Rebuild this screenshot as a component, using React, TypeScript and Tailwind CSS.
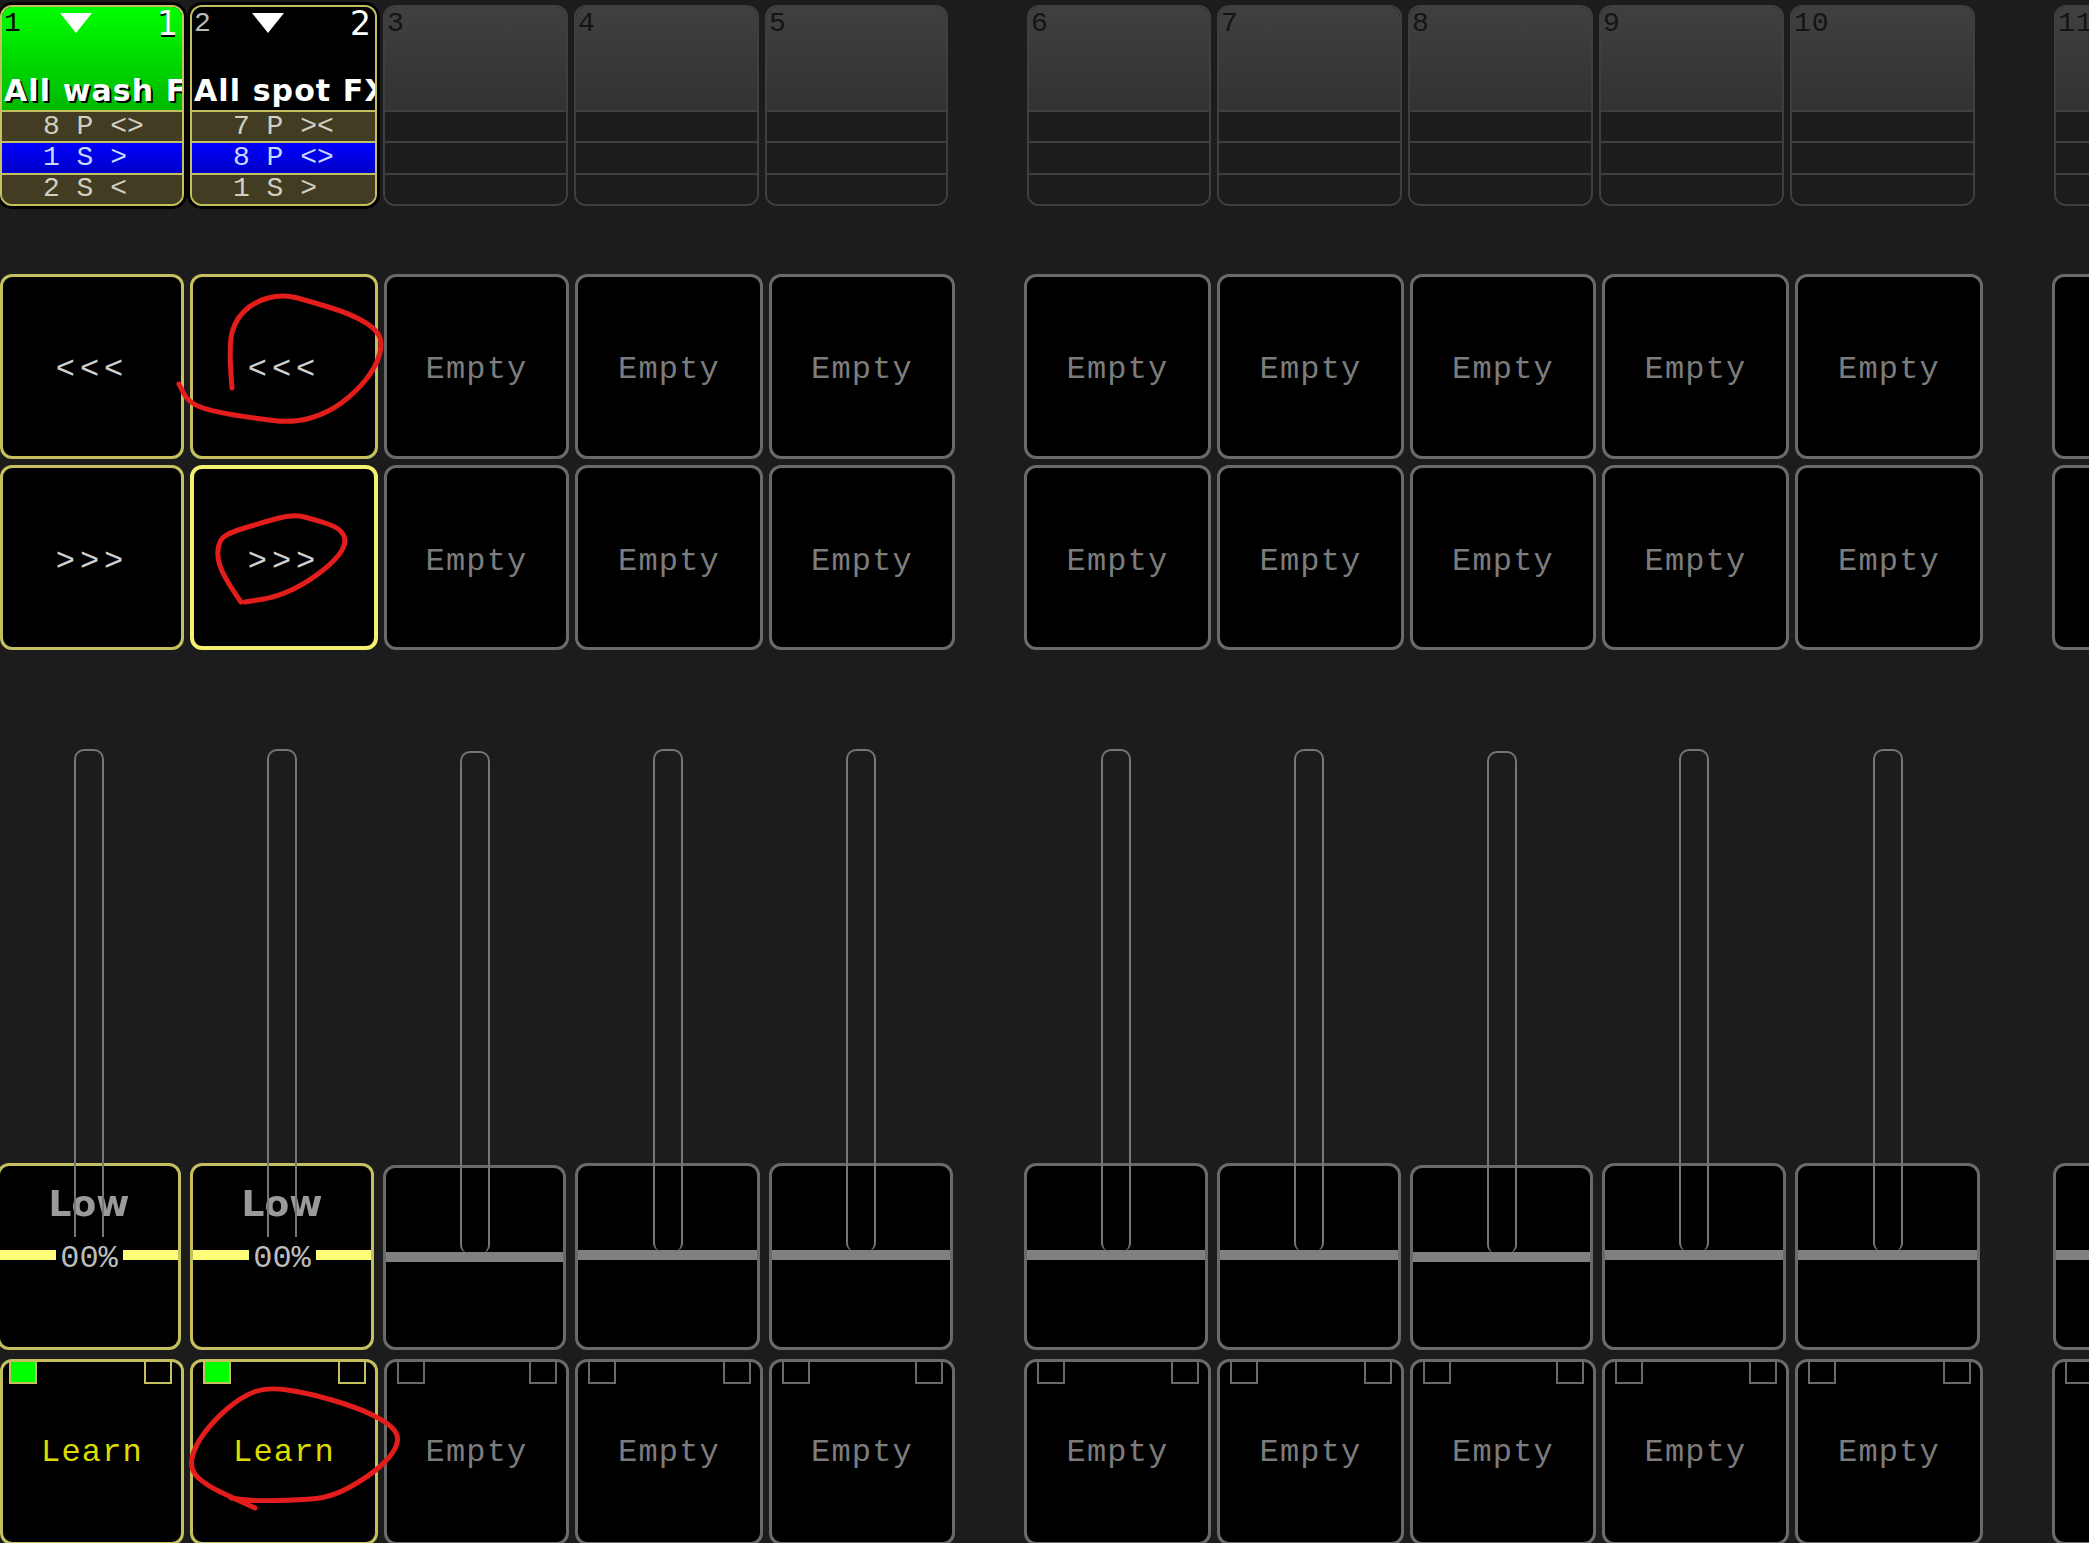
type Tile = { num: string; big?: boolean; name?: string; green?: boolean; rows?: string[]; blue?: number };

const mono = 'font-["Liberation_Mono",monospace]';
const sans = 'font-["DejaVu_Sans",sans-serif]';

const tiles: (Tile | null)[] = [
  { num: '1', big: true, name: 'All wash FX', green: true, rows: ['8 P <>', '1 S >', '2 S <'], blue: 1 },
  { num: '2', big: true, name: 'All spot FX', rows: ['7 P ><', '8 P <>', '1 S >'], blue: 1 },
  { num: '3' },
  { num: '4' },
  { num: '5' },
  null,
  { num: '6' },
  { num: '7' },
  { num: '8' },
  { num: '9' },
  { num: '10' },
  null,
  { num: '11' },
];

// which of the 13 grid slots are real (two spacers split the banks)
const slots = [0, 1, 2, 3, 4, -1, 5, 6, 7, 8, 9, -1, 10];

function TopTile({ tile }: { tile: Tile }) {
  const active = !!tile.rows;
  return (
    <div
      className={`flex h-[201px] flex-col overflow-hidden rounded-[12px] border-2 ${
        active ? 'border-[#c4c060] shadow-[0_0_0_3px_#000]' : 'border-[#3f3f3f]'
      }`}
    >
      <div
        className={`flex h-[103px] flex-col justify-between overflow-hidden ${
          tile.green
            ? 'bg-gradient-to-b from-[#00ff00] to-[#00b800]'
            : active
              ? 'bg-black'
              : 'bg-gradient-to-b from-[#404040] to-[#323232]'
        }`}
      >
        <div className="flex items-start justify-between pl-[2px] pr-[4px]">
          <span
            className={`${mono} text-[28px] leading-[34px] tracking-[1px] ${
              tile.green ? 'text-black' : active ? 'text-[#bbbbbb]' : 'text-[#141414]'
            }`}
          >
            {tile.num}
          </span>
          {active && (
            <svg viewBox="0 0 32 20" className="mt-[6px] ml-[-26px] h-[20px] w-[32px] blur-[0.6px]">
              <polygon points="0,0 32,0 16,20" fill="#ffffff" />
            </svg>
          )}
          {active && (
            <span
              className={`${sans} text-[33px] leading-[34px] text-white [text-shadow:0_2px_0_#000]`}
            >
              {tile.num}
            </span>
          )}
        </div>
        {tile.name && (
          <div
            className={`${sans} pl-[2px] text-[30px] leading-[38px] font-bold tracking-[1.1px] whitespace-nowrap text-white [text-shadow:2px_2px_0_#000]`}
          >
            {tile.name}
          </div>
        )}
      </div>
      {[0, 1, 2].map((i) => {
        const blue = active && tile.blue === i;
        return (
          <div
            key={i}
            className={`${mono} flex flex-1 items-center justify-start border-t-2 pl-[41px] text-[28px] leading-none whitespace-pre ${
              active ? 'border-[#c4c060]' : 'border-[#3f3f3f]'
            } ${
              blue
                ? 'bg-gradient-to-b from-[#0000ff] to-[#0000c8] text-[#c8d8ff]'
                : active
                  ? 'bg-[#423d22] text-[#d0d0c4]'
                  : 'bg-[#1c1c1c]'
            }`}
          >
            {tile.rows ? tile.rows[i] : ''}
          </div>
        );
      })}
    </div>
  );
}

function PadButton({ label, active, bright, lowerRow }: { label: string; active?: boolean; bright?: boolean; lowerRow?: boolean }) {
  return (
    <div
      className={`${mono} flex h-[185px] items-center justify-center rounded-[12px] bg-black text-[32px] leading-none ${
        lowerRow ? 'pt-[9px]' : 'pt-[6px]'
      } ${
        bright
          ? 'border-4 border-[#f4f070]'
          : active
            ? 'border-[3px] border-[#c4c060]'
            : 'border-[3px] border-[#6a6a6a]'
      } ${active ? 'tracking-[5px] text-[#d0d0d0]' : 'tracking-[1.2px] text-[#7c7c7c]'}`}
    >
      {label}
    </div>
  );
}

function Fader({ active, lower, hideTrack, first }: { active?: boolean; lower?: boolean; hideTrack?: boolean; first?: boolean }) {
  return (
    <div className={`flex h-[601px] flex-col justify-end ${first ? '-ml-[3px]' : ''}`}>
      {!hideTrack && (
        <div
          className={`relative z-10 mx-auto w-[30px] rounded-t-[10px] border-x-2 border-t-2 border-[#767676] ${
            active ? '-mb-[74px] h-[488px]' : 'rounded-b-[8px] -mb-[88px] h-[502px]'
          }`}
        />
      )}
      <div
        className={`flex flex-col rounded-[12px] border-[3px] bg-black ${
          active ? 'border-[#c4c060]' : 'border-[#6a6a6a]'
        } ${lower ? 'h-[185px]' : 'h-[187px]'}`}
      >
        <div
          className={`${sans} flex h-[84px] items-center justify-center pb-[8px] text-[36px] leading-none font-bold text-[#9a9a9a] blur-[0.5px]`}
        >
          {active ? 'Low' : ''}
        </div>
        {active ? (
          <div className="flex h-[10px] items-center">
            <div className="h-[10px] flex-1 bg-[#fdfd78]" />
            <span className={`${mono} w-[67px] pt-[8px] text-center text-[32px] leading-none text-[#bcbcbc]`}>00%</span>
            <div className="h-[10px] flex-1 bg-[#fdfd78]" />
          </div>
        ) : (
          <div className="h-[10px] bg-[#808080]" />
        )}
      </div>
    </div>
  );
}

function LearnCell({ label, active, first }: { label: string; active?: boolean; first?: boolean }) {
  const square = active ? 'border-[#c4c060]' : 'border-[#6a6a6a]';
  return (
    <div
      className={`flex h-[186px] flex-col rounded-[12px] border-[3px] bg-black ${
        active ? 'border-[#c4c060]' : 'border-[#6a6a6a]'
      }`}
    >
      <div className="flex justify-between pr-[9px] pl-[10px]">
        <div className={`h-[22px] w-[28px] border-x-2 border-b-2 ${square} ${active ? 'bg-[#00ff00]' : ''} ${first ? '-ml-[4px]' : ''}`} />
        <div className={`h-[22px] w-[28px] border-x-2 border-b-2 ${square}`} />
      </div>
      <div
        className={`${mono} flex flex-1 items-center justify-center pb-[20px] text-[32px] leading-none tracking-[1.2px] ${
          active ? 'text-[#dcdc00]' : 'text-[#7c7c7c]'
        }`}
      >
        {label}
      </div>
    </div>
  );
}

// hand drawn red marks, smoothed through the midpoints
function scribble(pts: number[][]) {
  let d = `M${pts[0][0]} ${pts[0][1]}`;
  for (let i = 1; i < pts.length - 1; i++) {
    const mx = (pts[i][0] + pts[i + 1][0]) / 2;
    const my = (pts[i][1] + pts[i + 1][1]) / 2;
    d += ` Q${pts[i][0]} ${pts[i][1]} ${mx} ${my}`;
  }
  const last = pts[pts.length - 1];
  return `${d} L${last[0]} ${last[1]}`;
}

const marks = [
  [[232, 388], [229, 353], [233, 323], [253, 302], [283, 294], [312, 302], [348, 313], [374, 327], [383, 342], [376, 367], [356, 392], [328, 413], [293, 423], [253, 418], [210, 411], [188, 402], [179, 384]],
  [[241, 602], [227, 582], [217, 560], [219, 540], [231, 532], [261, 523], [293, 514], [316, 520], [340, 528], [347, 542], [336, 560], [308, 582], [277, 597], [245, 602]],
  [[255, 1508], [233, 1498], [206, 1485], [190, 1470], [194, 1447], [214, 1420], [241, 1397], [267, 1387], [308, 1393], [356, 1407], [389, 1423], [400, 1438], [391, 1457], [368, 1477], [332, 1497], [300, 1500], [253, 1501], [231, 1498]],
];

const padColumns = 'grid grid-cols-[184px_188px_185px_188px_186px_57px_187px_187px_186px_187px_188px_57px_187px] gap-x-[6px]';

export default function App() {
  return (
    <div className="relative h-[1543px] w-full overflow-hidden bg-[#1c1c1c]">
      <div className="pt-[5px]">
        <div className="grid grid-cols-[184px_187px_185px_185px_183px_67px_184px_185px_185px_185px_185px_67px_185px] gap-x-[6px]">
          {tiles.map((t, i) => (t ? <TopTile key={i} tile={t} /> : <div key={i} />))}
        </div>

        <div className={`mt-[68px] ${padColumns}`}>
          {slots.map((s, i) =>
            s < 0 ? <div key={i} /> : <PadButton key={i} label={s < 2 ? '<<<' : 'Empty'} active={s < 2} />,
          )}
        </div>
        <div className={`mt-[6px] ${padColumns}`}>
          {slots.map((s, i) =>
            s < 0 ? (
              <div key={i} />
            ) : (
              <PadButton key={i} label={s < 2 ? '>>>' : 'Empty'} active={s < 2} bright={s === 1} lowerRow />
            ),
          )}
        </div>

        <div className="mt-[99px] grid grid-cols-[181px_184px_183px_185px_184px_53px_184px_184px_183px_184px_185px_55px_185px] gap-x-[9px]">
          {slots.map((s, i) =>
            s < 0 ? (
              <div key={i} />
            ) : (
              <Fader key={i} active={s < 2} lower={s === 2 || s === 7} hideTrack={s === 10} first={s === 0} />
            ),
          )}
        </div>

        <div className={`mt-[9px] ${padColumns}`}>
          {slots.map((s, i) =>
            s < 0 ? (
              <div key={i} />
            ) : (
              <LearnCell key={i} label={s < 2 ? 'Learn' : 'Empty'} active={s < 2} first={s === 0} />
            ),
          )}
        </div>
      </div>

      <svg viewBox="0 0 2089 1543" className="pointer-events-none absolute top-0 left-0 z-20 h-[1543px] w-[2089px]">
        {marks.map((m, i) => (
          <path key={i} d={scribble(m)} fill="none" stroke="#e31c1c" strokeWidth={5} strokeLinecap="round" />
        ))}
      </svg>
    </div>
  );
}
